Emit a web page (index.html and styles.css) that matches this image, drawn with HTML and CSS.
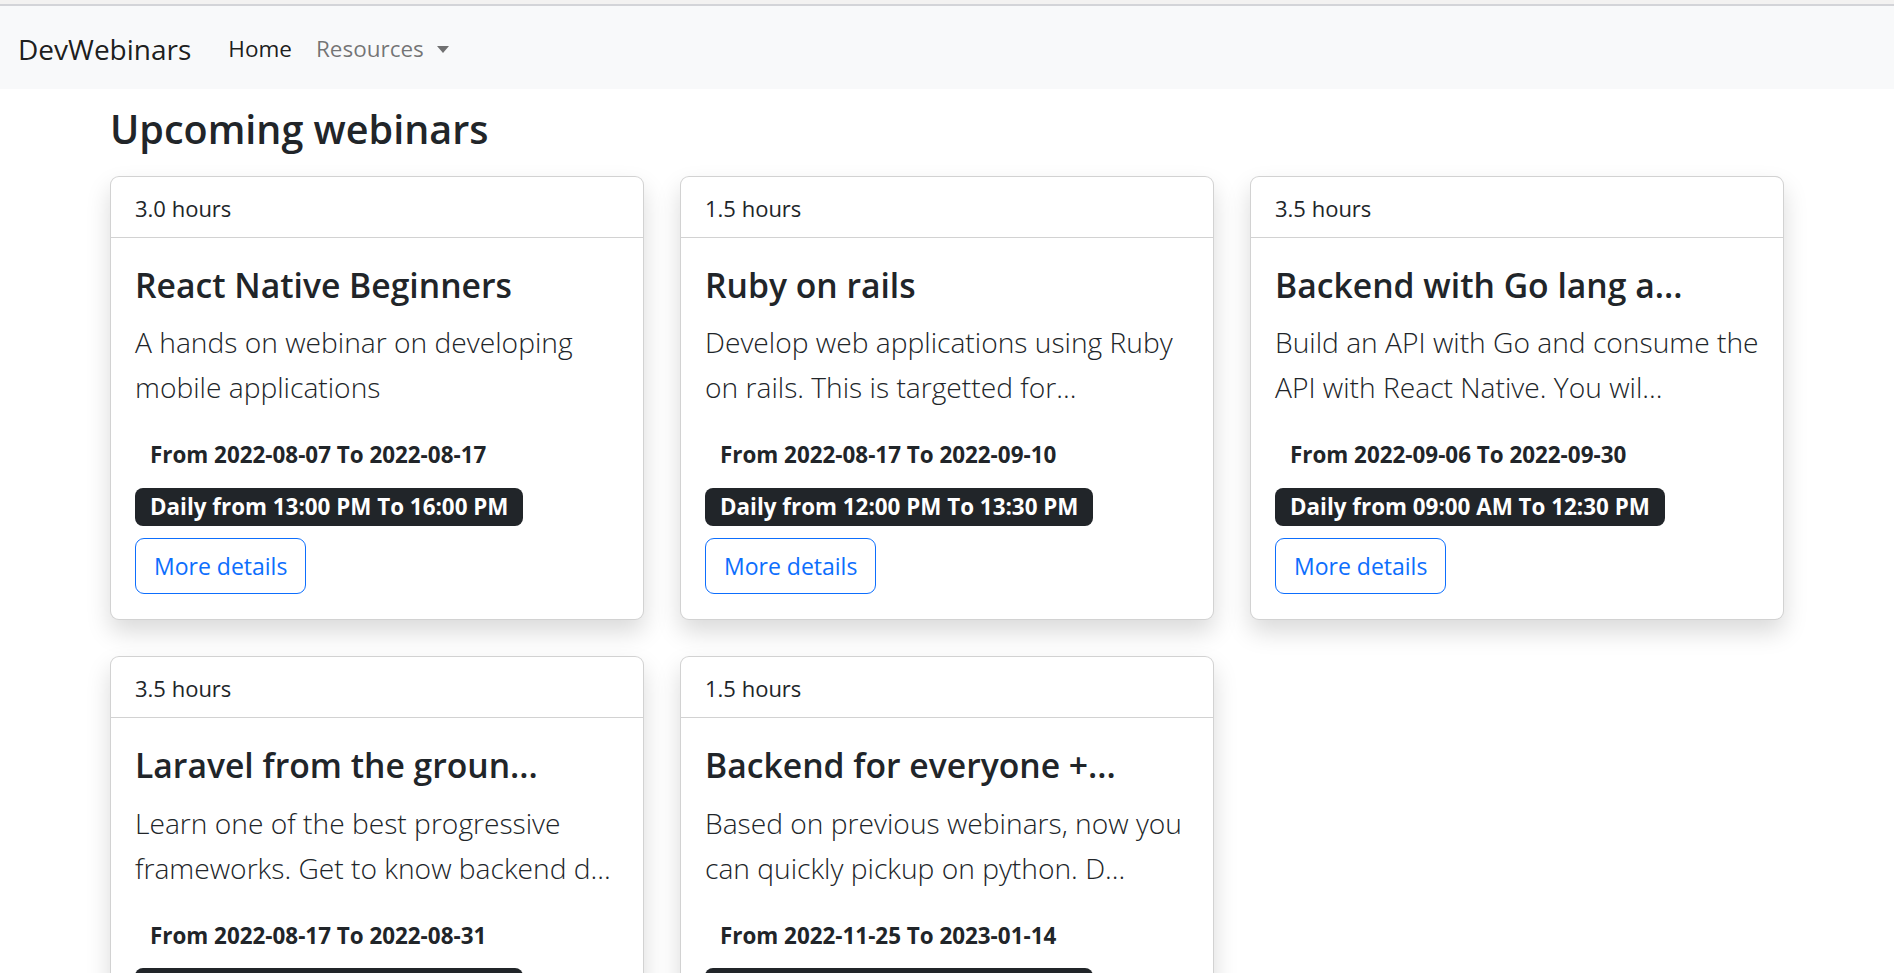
FILE: index.html
```html
<!DOCTYPE html>
<html lang="en">
<head>
<meta charset="utf-8">
<title>DevWebinars</title>
<link rel="stylesheet" href="styles.css">
</head>
<body>
<div class="topbar"></div>
<nav class="navbar">
  <a class="brand" href="#">DevWebinars</a>
  <ul class="nav">
    <li><a class="nav-link active" href="#">Home</a></li>
    <li><a class="nav-link" href="#">Resources<span class="caret"></span></a></li>
  </ul>
</nav>
<main class="container">
  <h3 class="page-title">Upcoming webinars</h3>
  <div class="grid">
    <div class="card">
      <div class="card-header">3.0 hours</div>
      <div class="card-body">
        <h4 class="card-title">React Native Beginners</h4>
        <p class="lead">A hands on webinar on developing<br>mobile applications</p>
        <span class="badge badge-date">From 2022-08-07 To 2022-08-17</span>
        <span class="badge badge-time">Daily from 13:00 PM To 16:00 PM</span>
        <a class="btn" href="#">More details</a>
      </div>
    </div>
    <div class="card">
      <div class="card-header">1.5 hours</div>
      <div class="card-body">
        <h4 class="card-title">Ruby on rails</h4>
        <p class="lead">Develop web applications using Ruby<br>on rails. This is targetted for...</p>
        <span class="badge badge-date">From 2022-08-17 To 2022-09-10</span>
        <span class="badge badge-time">Daily from 12:00 PM To 13:30 PM</span>
        <a class="btn" href="#">More details</a>
      </div>
    </div>
    <div class="card">
      <div class="card-header">3.5 hours</div>
      <div class="card-body">
        <h4 class="card-title">Backend with Go lang a...</h4>
        <p class="lead">Build an API with Go and consume the<br>API with React Native. You wil...</p>
        <span class="badge badge-date">From 2022-09-06 To 2022-09-30</span>
        <span class="badge badge-time">Daily from 09:00 AM To 12:30 PM</span>
        <a class="btn" href="#">More details</a>
      </div>
    </div>
    <div class="card">
      <div class="card-header">3.5 hours</div>
      <div class="card-body">
        <h4 class="card-title">Laravel from the groun...</h4>
        <p class="lead">Learn one of the best progressive<br>frameworks. Get to know backend d...</p>
        <span class="badge badge-date">From 2022-08-17 To 2022-08-31</span>
        <span class="badge badge-time">Daily from 14:00 PM To 17:30 PM</span>
        <a class="btn" href="#">More details</a>
      </div>
    </div>
    <div class="card">
      <div class="card-header">1.5 hours</div>
      <div class="card-body">
        <h4 class="card-title">Backend for everyone +...</h4>
        <p class="lead">Based on previous webinars, now you<br>can quickly pickup on python. D...</p>
        <span class="badge badge-date">From 2022-11-25 To 2023-01-14</span>
        <span class="badge badge-time">Daily from 12:00 PM To 13:30 PM</span>
        <a class="btn" href="#">More details</a>
      </div>
    </div>
  </div>
</main>
</body>
</html>
```
FILE: styles.css
```css
* {
  box-sizing: border-box;
}

body {
  margin: 0;
  font-family: "Open Sans", "Noto Sans", sans-serif;
  color: #212529;
  background: #fff;
}

.topbar {
  height: 6px;
  background: #f3f2f1;
  border-bottom: 2px solid #d3d4d8;
}

.navbar {
  height: 83px;
  background: #f8f9fa;
  display: flex;
  align-items: center;
  padding: 2px 18px 0;
}

.brand {
  font-size: 28px;
  line-height: 1.5;
  color: rgba(0, 0, 0, 0.9);
  text-decoration: none;
  margin-right: 25px;
}

.nav {
  display: flex;
  list-style: none;
  margin: 0;
  padding: 0;
}

.nav-link {
  display: flex;
  align-items: center;
  padding: 0 12px;
  font-size: 22.5px;
  line-height: 1.5;
  color: rgba(0, 0, 0, 0.55);
  text-decoration: none;
}

.nav-link.active {
  color: rgba(0, 0, 0, 0.9);
}

.caret {
  display: inline-block;
  margin-left: 13px;
  margin-top: 1px;
  border-top: 7px solid rgba(0, 0, 0, 0.55);
  border-left: 6.5px solid transparent;
  border-right: 6.5px solid transparent;
}

.container {
  max-width: 1710px;
  margin: 0 auto;
  padding: 0 18px;
}

.page-title {
  margin: 17px 0 23px;
  font-size: 39.5px;
  font-weight: 600;
  line-height: 47px;
}

.grid {
  display: grid;
  grid-template-columns: repeat(3, 1fr);
  column-gap: 36px;
  row-gap: 36px;
  align-items: start;
}

.card {
  background: #fff;
  border: 1px solid rgba(0, 0, 0, 0.175);
  border-radius: 9px;
  box-shadow: 0 12px 24px rgba(0, 0, 0, 0.15);
}

.card-header {
  height: 61px;
  padding: 12.5px 24px 11.5px;
  font-size: 22px;
  line-height: 36px;
  border-bottom: 1px solid rgba(0, 0, 0, 0.175);
}

.card-body {
  display: flex;
  flex-direction: column;
  align-items: flex-start;
  padding: 24px 24px 25px;
}

.card-title {
  margin: 3px 0 15px;
  font-size: 33.7px;
  font-weight: 600;
  line-height: 1.2;
}

.lead {
  margin: 0;
  font-size: 28.2px;
  font-weight: 300;
  line-height: 45px;
  white-space: nowrap;
}

.badge {
  display: inline-block;
  padding: 7.5px 15px 7.8px;
  font-size: 22.4px;
  font-weight: 700;
  line-height: 1;
  border-radius: 8px;
  white-space: nowrap;
}

.badge-date {
  margin-top: 26.5px;
  color: #212529;
}

.badge-time {
  margin-top: 13.4px;
  background: #212529;
  color: #fff;
}

.btn {
  display: inline-block;
  margin-top: 12px;
  padding: 9.2px 18px;
  font-size: 23px;
  line-height: 36px;
  color: #0d6efd;
  border: 1px solid #0d6efd;
  border-radius: 9px;
  text-decoration: none;
}
```
